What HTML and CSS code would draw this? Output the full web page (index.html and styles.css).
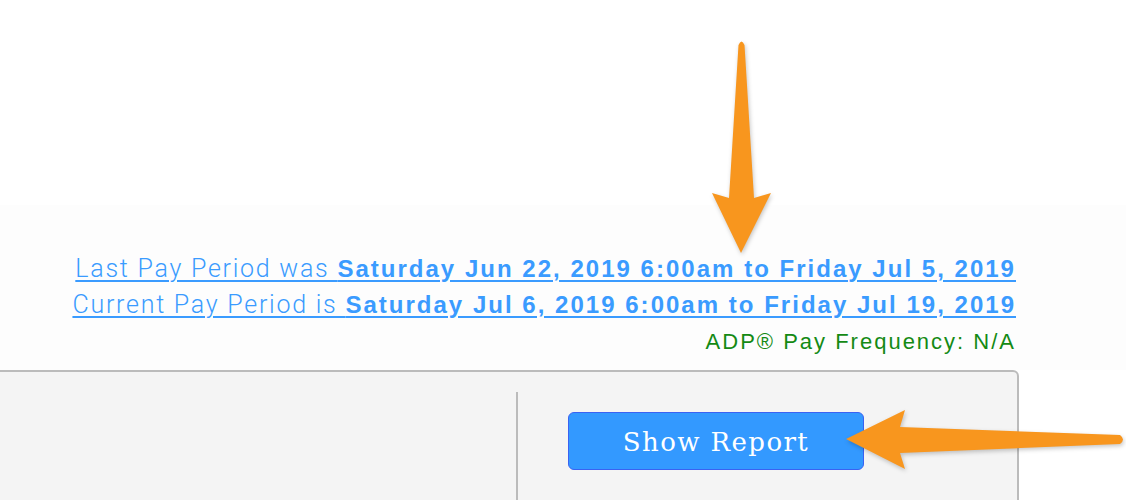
FILE: index.html
```html
<!DOCTYPE html>
<html>
<head>
<meta charset="utf-8">
<link rel="stylesheet" href="styles.css">
</head>
<body>
<div class="page">
  <div class="hero"></div>
  <div class="periods">
    <a class="period" href="#">Last Pay Period was <b>Saturday Jun 22, 2019 6:00am to Friday Jul 5, 2019</b></a>
    <a class="period" href="#">Current Pay Period is <b>Saturday Jul 6, 2019 6:00am to Friday Jul 19, 2019</b></a>
    <div class="freq">ADP® Pay Frequency: N/A</div>
  </div>
  <div class="panel">
    <div class="panel-left"></div>
    <div class="panel-right">
      <button class="show-btn" type="button">Show Report</button>
    </div>
  </div>
  <svg class="arrows" width="1126" height="500" viewBox="0 0 1126 500">
    <path class="arrow" d="M738.5,45 Q741.5,38 744.5,45 L754,198 L771,193 L741,253 L712,193 L729,198 Z"/>
    <path class="arrow" d="M846,439 L905,410 L900,427 L1120,435 Q1126,439.5 1120,444 L900,453 L905,469 Z"/>
  </svg>
</div>
</body>
</html>
```

FILE: styles.css
```css
html, body {
  margin: 0;
  padding: 0;
  background: #ffffff;
  overflow: hidden;
}

.page {
  position: relative;
  width: 1126px;
  height: 500px;
  overflow: hidden;
  font-family: "Liberation Sans", Arial, sans-serif;
}

.hero {
  height: 205px;
  background: #ffffff;
}

.periods {
  height: 165px;
  background: #fdfdfd;
  padding: 46px 110px 0 0;
  box-sizing: border-box;
  display: flex;
  flex-direction: column;
  align-items: flex-end;
}

.period {
  display: block;
  color: #3a9bff;
  font-family: Roboto, "Liberation Sans", sans-serif;
  font-weight: 300;
  font-size: 25px;
  line-height: 36px;
  letter-spacing: 1.75px;
  text-decoration: underline;
  text-decoration-thickness: 2px;
  text-underline-offset: 3px;
  white-space: nowrap;
}

.period b {
  font-family: "Liberation Sans", Arial, sans-serif;
  font-size: 24px;
  font-weight: 700;
  letter-spacing: 2.02px;
}

.freq {
  color: #148a14;
  font-size: 22px;
  line-height: 37px;
  letter-spacing: 2px;
  white-space: nowrap;
}

.panel {
  display: flex;
  height: 200px;
  margin: 0 107px 0 -10px;
  background: #f4f4f4;
  border: 2px solid #bbbbbb;
  border-radius: 6px;
}

.panel-left {
  width: 524px;
  flex: none;
}

.panel-right {
  flex: 1;
  margin-top: 20px;
  border-left: 2px solid #bbbbbb;
  padding: 20px 0 0 50px;
}

.show-btn {
  display: block;
  width: 296px;
  height: 58px;
  box-sizing: border-box;
  background: #3399ff;
  border: 1px solid #3a62f2;
  border-radius: 6px;
  color: #ffffff;
  font-family: "DejaVu Serif", "Liberation Serif", serif;
  font-size: 26px;
  letter-spacing: 1.4px;
  padding: 2px 0 0 0;
  cursor: pointer;
}

.arrows {
  position: absolute;
  left: 0;
  top: 0;
  pointer-events: none;
}

.arrow {
  fill: #f8961e;
  filter: drop-shadow(1px 2px 2px rgba(0, 0, 0, 0.22));
}
```
